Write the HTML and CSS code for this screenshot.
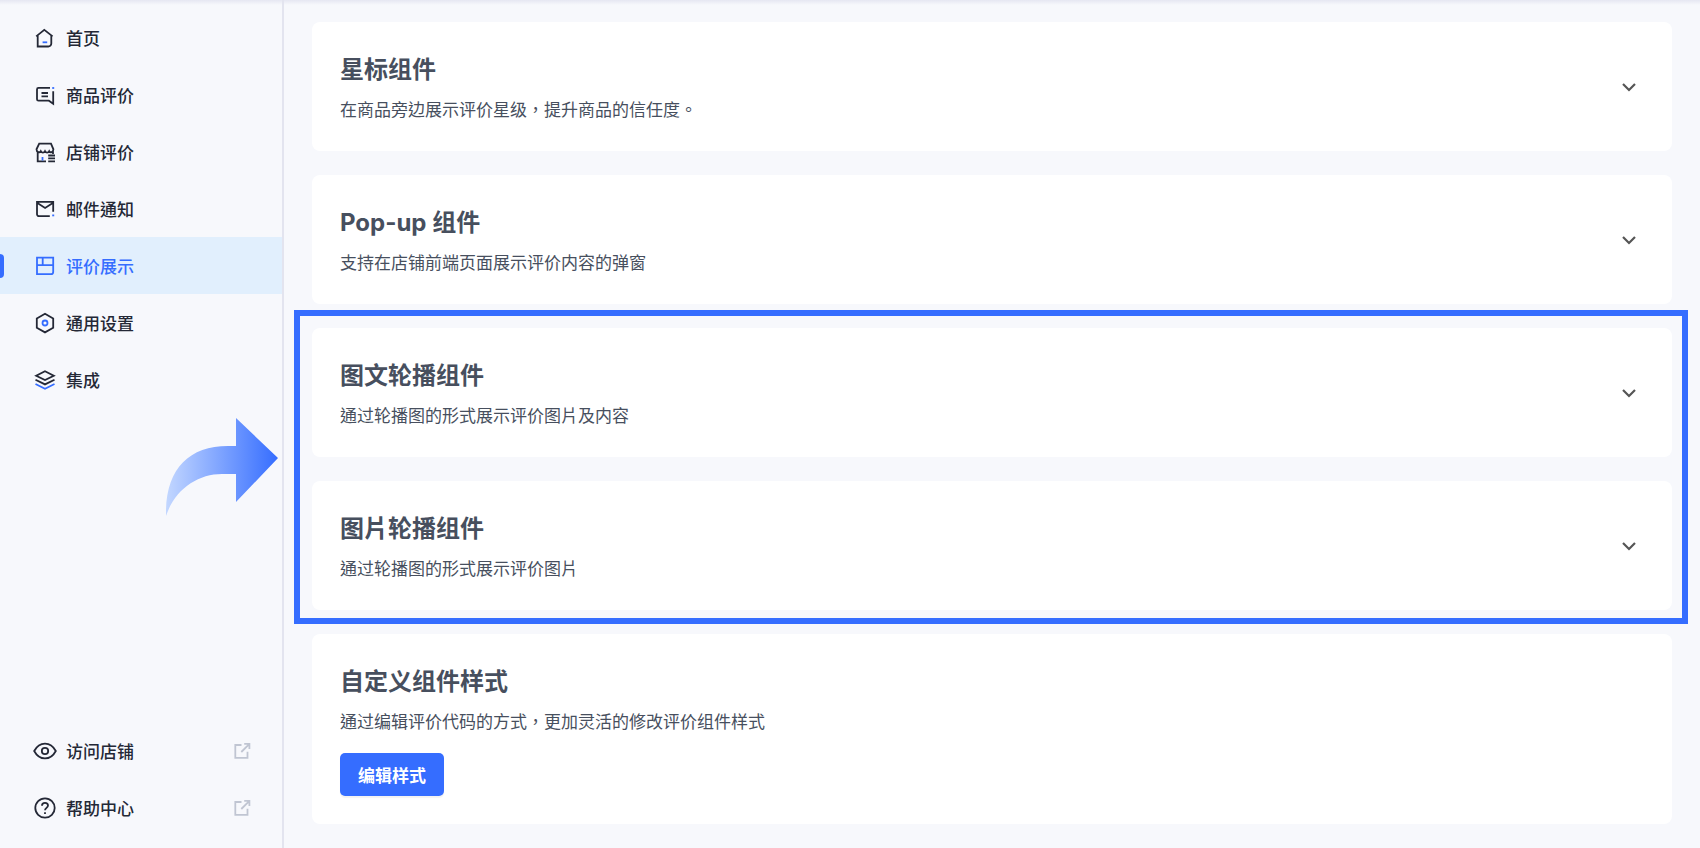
FILE: index.html
```html
<!DOCTYPE html>
<html lang="zh-TW">
<head>
<meta charset="utf-8">
<title>评价展示</title>
<link rel="stylesheet" href="styles.css">
</head>
<body>
<div class="layout">
  <aside class="sidebar">
    <nav class="nav">
      <a class="nav-item" href="#home">
        <svg class="icon" viewBox="0 0 24 24"><path d="M3.2 10.4 11.3 3.9l8.3 6.5M4.7 9.4v11.1h10.6a3 3 0 0 0 3-3V9.4"/><path class="accent" d="M9.6 16.3h4.6"/></svg>
        <span>首页</span>
      </a>
      <a class="nav-item" href="#products">
        <svg class="icon" viewBox="0 0 24 24"><path d="M17 4.900H5.500A1.500 1.500 0 0 0 4 6.400v9.800a1.500 1.500 0 0 0 1.500 1.500h10.400l4.300 3V8.300M8.500 10h6.500M8.500 13.400h6.500"/><path class="accent" d="M19.200 5h2"/></svg>
        <span>商品评价</span>
      </a>
      <a class="nav-item" href="#store">
        <svg class="icon" viewBox="0 0 24 24"><path d="M6.200 3.700h11.800l2.400 5.600c0 3.200-3.200 3.700-4.200 1.900-1 1.800-3.200 1.800-4.200 0-1 1.800-3.200 1.800-4.200 0-1 1.800-4.300 1.300-4.300-1.900zM4.700 12v9.300h8.300M20 11.500v2.500M15.200 15.500h6.800M15.200 18.400h6.800M15.200 21.300h6.800"/><path class="accent" d="M9.500 17v3.500"/></svg>
        <span>店铺评价</span>
      </a>
      <a class="nav-item" href="#mail">
        <svg class="icon" viewBox="0 0 24 24"><path d="M16.800 19.200H6a2 2 0 0 1-2-2V4.900h16.200v9.900M4 5.800l8.100 5.200 8.100-5.200"/><path class="accent" d="M19.200 18.400h2"/></svg>
        <span>邮件通知</span>
      </a>
      <a class="nav-item active" href="#display" aria-current="page">
        <svg class="icon" viewBox="0 0 24 24"><path d="M4 3.700h16.200v14.300a2.200 2.200 0 0 1-2.200 2.200H4zM4 11.200h16.200M9.700 3.700v7.500"/></svg>
        <span>评价展示</span>
      </a>
      <a class="nav-item" href="#settings">
        <svg class="icon" viewBox="0 0 24 24"><path d="m12 2.700 8.200 4.700v9.300L12 21.400l-8.200-4.700V7.400z"/><circle class="accent" cx="12" cy="12" r="2.500"/></svg>
        <span>通用设置</span>
      </a>
      <a class="nav-item" href="#integrations">
        <svg class="icon" viewBox="0 0 24 24"><path d="m12 3.300 8.800 4.400-8.800 4.400-8.800-4.400zM2.500 11.700l9.500 4.700 9.500-4.700"/><path class="accent" d="m2.500 16 9.500 4.700 9.500-4.700"/></svg>
        <span>集成</span>
      </a>
    </nav>
    <nav class="nav">
      <a class="nav-item" href="#visit">
        <svg class="icon" viewBox="0 0 24 24"><path d="M1.200 12C3.700 7.300 7.500 4.600 12 4.600S20.300 7.300 22.800 12C20.300 16.700 16.500 19.400 12 19.400S3.700 16.700 1.200 12z"/><circle cx="12" cy="12" r="3.200"/></svg>
        <span>访问店铺</span>
        <svg class="icon external" viewBox="0 0 24 24"><path d="M11.500 6H5.300v12.800h12.200V12.800M11.300 13l7.900-7.900M14.200 4.900h5.200v5.200"/></svg>
      </a>
      <a class="nav-item" href="#help">
        <svg class="icon" viewBox="0 0 24 24"><circle cx="12" cy="12" r="9.700"/><path d="M9 9.700c0-1.700 1.300-2.800 3-2.800s3 1.100 3 2.700c0 2.100-3 2.400-3 4.600M12 16.200v1.700"/></svg>
        <span>帮助中心</span>
        <svg class="icon external" viewBox="0 0 24 24"><path d="M11.500 6H5.300v12.800h12.200V12.800M11.300 13l7.900-7.900M14.200 4.900h5.200v5.200"/></svg>
      </a>
    </nav>
  </aside>

  <main class="content">
    <section class="card">
      <div class="card-text">
        <h2 class="card-title">星标组件</h2>
        <p class="card-desc">在商品旁边展示评价星级，提升商品的信任度。</p>
      </div>
      <button class="toggle" type="button" aria-label="展开星标组件"><svg class="chevron" viewBox="0 0 24 24"><path d="m6 9 6 6 6-6"/></svg></button>
    </section>
    <section class="card">
      <div class="card-text">
        <h2 class="card-title">Pop-up 组件</h2>
        <p class="card-desc">支持在店铺前端页面展示评价内容的弹窗</p>
      </div>
      <button class="toggle" type="button" aria-label="展开 Pop-up 组件"><svg class="chevron" viewBox="0 0 24 24"><path d="m6 9 6 6 6-6"/></svg></button>
    </section>
    <div class="highlight">
      <section class="card">
        <div class="card-text">
          <h2 class="card-title">图文轮播组件</h2>
          <p class="card-desc">通过轮播图的形式展示评价图片及内容</p>
        </div>
        <button class="toggle" type="button" aria-label="展开图文轮播组件"><svg class="chevron" viewBox="0 0 24 24"><path d="m6 9 6 6 6-6"/></svg></button>
      </section>
      <section class="card">
        <div class="card-text">
          <h2 class="card-title">图片轮播组件</h2>
          <p class="card-desc">通过轮播图的形式展示评价图片</p>
        </div>
        <button class="toggle" type="button" aria-label="展开图片轮播组件"><svg class="chevron" viewBox="0 0 24 24"><path d="m6 9 6 6 6-6"/></svg></button>
      </section>
      <svg class="pointer" viewBox="0 0 112 98" aria-hidden="true">
        <defs><linearGradient id="pointer-fill" x1="0" x2="1" y1="0" y2="0"><stop offset="0" stop-color="#c3d7ff"/><stop offset="1" stop-color="#356dff"/></linearGradient></defs>
        <path fill="url(#pointer-fill)" d="M70 0l42 40-42 44V56H56C32 56 9 71 0 98-1 52 22 28 62 28h8z"/>
      </svg>
    </div>
    <section class="card">
      <div class="card-text">
        <h2 class="card-title">自定义组件样式</h2>
        <p class="card-desc">通过编辑评价代码的方式，更加灵活的修改评价组件样式</p>
        <button class="primary" type="button">编辑样式</button>
      </div>
    </section>
  </main>
</div>
</body>
</html>
```
FILE: styles.css
```css
* {
  box-sizing: border-box;
}

body {
  margin: 0;
  background: #f7f8fc;
  color: #474f5e;
  font-family: Inter, "Noto Sans CJK TC", sans-serif;
  font-size: 17px;
}

.layout {
  display: flex;
  min-height: 100vh;
  background: linear-gradient(#e6e7f2, #f7f8fc 5px);
}

.sidebar {
  display: flex;
  flex: 0 0 284px;
  flex-direction: column;
  justify-content: space-between;
  padding: 9px 0 12px;
  border-right: 2px solid #e3e4ef;
}

.nav {
  display: flex;
  flex-direction: column;
}

.nav-item {
  position: relative;
  display: flex;
  align-items: center;
  gap: 9px;
  height: 57px;
  padding: 0 28px 0 33px;
  color: #242836;
  font-weight: 500;
  text-decoration: none;
}

.nav-item.active {
  background: #e1effd;
  color: #356dff;
}

.nav-item.active::before {
  content: "";
  position: absolute;
  left: 0;
  width: 4px;
  height: 24px;
  border-radius: 0 4px 4px 0;
  background: #356dff;
}

.icon {
  flex: none;
  width: 24px;
  height: 24px;
  fill: none;
  stroke: currentColor;
  stroke-width: 1.8;
}

.icon .accent {
  stroke: #356dff;
}

.icon.external {
  margin-left: auto;
  color: #c0c5d2;
}

.content {
  display: flex;
  flex: 1;
  flex-direction: column;
  gap: 24px;
  min-width: 0;
  padding: 22px 28px 24px;
}

.card {
  display: flex;
  align-items: center;
  justify-content: space-between;
  padding: 28px;
  border-radius: 8px;
  background: #fff;
}

.card-title {
  margin: 0 0 8px;
  font-size: 24px;
  font-weight: 700;
  line-height: 40px;
}

.card-desc {
  margin: 0;
  line-height: 25px;
}

.toggle {
  display: flex;
  padding: 3px;
  border: 0;
  background: none;
  color: #555;
  cursor: pointer;
}

.chevron {
  width: 24px;
  height: 24px;
  fill: none;
  stroke: currentColor;
  stroke-width: 2.2;
}

.highlight {
  position: relative;
  display: flex;
  flex-direction: column;
  gap: 24px;
}

.highlight::after {
  content: "";
  position: absolute;
  inset: -18px -16px -14px -18px;
  border: 6px solid #356dff;
  pointer-events: none;
}

.pointer {
  position: absolute;
  top: 90px;
  right: calc(100% + 34px);
  width: 112px;
  height: 98px;
}

.primary {
  height: 43px;
  margin-top: 18px;
  padding: 0 18px;
  border: 0;
  border-radius: 5px;
  background: #356dff;
  box-shadow: 0 2px 1px rgba(0, 0, 0, 0.05);
  color: #fff;
  font: inherit;
  font-weight: 700;
  cursor: pointer;
}
```
